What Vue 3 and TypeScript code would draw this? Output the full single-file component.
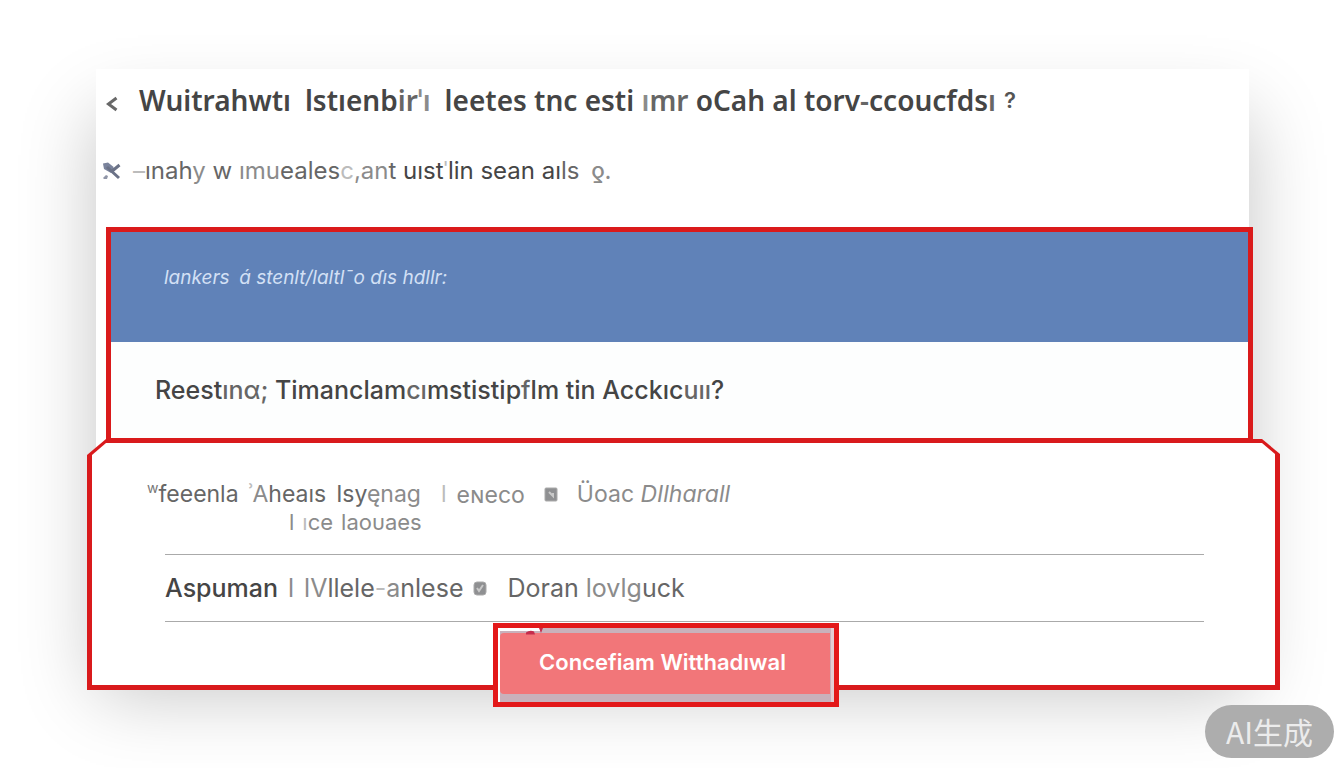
<script setup lang="ts">
type Tone = 'strong' | 'mid' | 'soft' | 'faint'
interface Piece { text: string; tone: Tone }

const p = (text: string, tone: Tone): Piece => ({ text, tone })

const title: Piece[] = [
  p('Wuitrahwtı\u2002lstıenb', 'strong'), p('ir', 'mid'), p('ˈı', 'soft'), p('\u2002leetes tnc esti ', 'strong'),
  p('ı', 'soft'), p('mr', 'mid'), p(' oCah al torv', 'strong'), p('-', 'mid'), p('ccoucfds', 'strong'), p('ı', 'mid')
]
const subtitle: Piece[] = [
  p('–', 'faint'), p('ınah', 'mid'), p('y', 'soft'), p(' w', 'mid'), p(' ımu', 'soft'), p('eales', 'mid'), p('c', 'faint'),
  p(',an', 'soft'), p('t', 'mid'), p(' uıst', 'strong'), p('ˈ', 'faint'), p('lin sean aı', 'strong'), p('ls', 'mid'), p('\u2002ƍ.', 'soft')
]
const question: Piece[] = [
  p('Reest', 'strong'), p('ınα;', 'mid'), p(' Ti', 'strong'), p('manclam', 'strong'), p('cı', 'mid'), p('mstistip', 'strong'),
  p('f', 'mid'), p('lm tin Acckıc', 'strong'), p('uıı', 'mid'), p('?', 'strong')
]
</script>

<template>
  <div class="page">
    <main class="dialog">
      <header class="head">
        <div class="title-row">
          <button class="icon-btn" type="button" aria-label="Back">
            <svg class="back" viewBox="0 0 12 16"><path d="M10.5 2 2.5 8l8 6" /></svg>
          </button>
          <h1 class="title"><span v-for="(s, i) in title" :key="i" :class="s.tone">{{ s.text }}</span></h1>
          <span class="mark">?</span>
        </div>
        <div class="sub-row">
          <button class="icon-btn" type="button" aria-label="Close">
            <svg class="cross" viewBox="0 0 20 18">
              <path class="blob" d="M1 1.500 6 .5l5 4 2 4-4 2.500-7-4Z" />
              <path class="stroke" d="m5 5 12 11M17.500 3 9 10" />
              <path class="dot" d="m1 16 3-3 2 1-1 3H2Z" />
            </svg>
          </button>
          <p class="subtitle"><span v-for="(s, i) in subtitle" :key="i" :class="s.tone">{{ s.text }}</span></p>
        </div>
      </header>

      <section class="notice">
        <div class="banner">
          <p>lankers&ensp;á stenlt/laltl¯o ɗıs hdllr:</p>
        </div>
        <h2 class="question"><span v-for="(s, i) in question" :key="i" :class="s.tone">{{ s.text }}</span></h2>
      </section>

      <section class="panel">
        <ul class="rows">
          <li class="row first">
            <div class="line">
              <span class="name"><sup>w</sup><span class="mid">feeenla</span></span>
              <span><span class="faint">ʾ</span><span class="soft">A</span><span class="mid">heaıs</span></span>
              <span><span class="mid">Isy</span><span class="soft">ęnag</span></span>
              <span class="faint bar">l</span>
              <span class="soft">eɴeco</span>
              <svg class="chip" viewBox="0 0 14 15"><rect x="1" y="1" width="12" height="13" rx="1" /><path d="m5 5 4 4V6" /></svg>
              <span class="soft">Üoac <i>DIlharall</i></span>
            </div>
            <div class="line under">
              <span class="soft">l</span><span><span class="faint">ı</span><span class="soft">ce</span></span><span class="soft">laoυaes</span>
            </div>
          </li>
          <li class="row second">
            <div class="line">
              <span class="strong name">Aspuman</span>
              <span class="soft">l</span>
              <span><span class="soft">lV</span><span class="mid">llele</span><span class="faint">-</span><span class="soft">a</span><span class="mid">nlese</span></span>
              <svg class="chip" viewBox="0 0 14 15"><rect x="1" y="1" width="12" height="13" rx="3" /><path d="m4 7 2 3 4-6" /></svg>
              <span class="last"><span class="mid">Doran</span> <span class="soft">lovlg</span><span class="mid">uck</span></span>
            </div>
          </li>
        </ul>
        <div class="frame">
          <svg class="notch" viewBox="0 0 48 8">
            <path class="paper" d="M0 0h44v3H0Z" /><path class="tip" d="M28 4.500q4-3 8-1l1 3h-9ZM41 0h4l-2 5Z" />
          </svg>
          <button class="confirm" type="button">Concefiam Witthadıwal</button>
        </div>
      </section>
    </main>
    <aside class="badge">AI生成</aside>
  </div>
</template>

<style>
body { margin: 0; background: #fff; }
</style>

<style scoped>
.page {
  position: relative;
  box-sizing: border-box;
  min-height: 100vh;
  padding: 69px 64px 60px 87px;
  overflow: hidden;
  font-family: Inter, "Noto Sans", sans-serif;
  color: #484848;
}
.dialog { position: relative; isolation: isolate; }
.dialog::before {
  content: "";
  position: absolute;
  z-index: -1;
  inset: 40px 31px 0 9px;
  box-shadow: 0 4px 72px rgba(0, 0, 0, .23);
}
h1, h2, p, ul { margin: 0; padding: 0; font-weight: 400; }
ul { list-style: none; }
.strong { color: #454545; }
.mid { color: #666; }
.soft { color: #8b8b8b; }
.faint { color: #bcbcbc; }

.head {
  box-sizing: border-box;
  min-height: 158px;
  margin: 0 31px 0 9px;
  padding: 12px 6px;
  background: #fff;
}
.title-row, .sub-row { display: flex; align-items: center; }
.icon-btn {
  display: flex;
  padding: 0;
  border: 0;
  background: none;
}
.title-row .icon-btn { width: 37px; padding: 8px 0 0 4px; box-sizing: border-box; }
.sub-row .icon-btn { width: 31px; }
.back { width: 12px; height: 16px; fill: none; stroke: #686868; stroke-width: 3; }
.cross { width: 20px; height: 18px; }
.blob { fill: #7a839c; }
.stroke { fill: none; stroke: #6b7287; stroke-width: 3; }
.dot { fill: #9096a8; }
.title { font: 600 28px/38px "Noto Sans", "Open Sans", sans-serif; white-space: nowrap; }
.mark { margin-left: 8px; font-size: 22px; font-weight: 600; color: #555; }
.sub-row { margin-top: 36px; }
.subtitle { font-size: 24px; line-height: 32px; white-space: nowrap; }

.notice {
  margin: 0 27px 0 19px;
  border: 5px solid #da1a1b;
  background: #fdfefe;
}
.banner {
  box-sizing: border-box;
  min-height: 110px;
  padding: 32px 53px;
  background: #6082b8;
  font-size: 19px;
  line-height: 28px;
  font-style: italic;
  color: #d3e0f5;
  white-space: nowrap;
}
.question {
  padding: 32px 44px;
  font-size: 25px;
  line-height: 32px;
  font-weight: 500;
  white-space: nowrap;
}

.panel {
  display: flow-root;
  position: relative;
  isolation: isolate;
  box-sizing: border-box;
  min-height: 251px;
  margin-top: -4px;
  padding: 40px 76px 0 78px;
}
.panel::before, .panel::after {
  content: "";
  position: absolute;
  z-index: -1;
}
.panel::before {
  inset: 0;
  background: #d91a1c;
  clip-path: polygon(19px 0, calc(100% - 18px) 0, 100% 15px, 100% 100%, 0 100%, 0 16px);
}
.panel::after {
  inset: 4px 5px 5px 5px;
  background: #fff;
  clip-path: polygon(14px 0, calc(100% - 13px) 0, 100% 11px, 100% 100%, 0 100%, 0 12px);
}
.row { border-bottom: 1px solid #aaa; white-space: nowrap; }
.line { display: flex; align-items: center; }
.first { box-sizing: border-box; height: 76px; font-size: 23px; }
.first .line { gap: 10px; height: 30px; }
.first .name { margin-left: -18px; }
.first sup { font-size: 14px; line-height: 0; color: #777; }
.first .bar { margin-left: 10px; }
.first .chip { margin: 0 9px; }
.first .under { gap: 8px; height: 26px; padding-left: 124px; font-size: 22px; }
.second { font-size: 25px; }
.second .line { gap: 10px; height: 66px; }
.second .name { font-weight: 500; }
.second .last { margin-left: 10px; }
.chip { width: 14px; height: 15px; }
.chip rect { fill: #8f9092; stroke: #aaa; }
.chip path { fill: none; stroke: #c9c9c9; stroke-width: 2; }

.frame {
  position: relative;
  box-sizing: border-box;
  width: 346px;
  margin: 1px auto -17px;
  left: -19px;
  padding: 5px 4px 8px 2px;
  border: 5px solid #e31819;
  background: #c9b1bb;
  box-shadow: inset 2px 0 #fff, inset -3px 0 #e4cdd3;
}
.notch { position: absolute; left: 0; top: 0; width: 48px; height: 8px; }
.paper { fill: #fff; }
.tip { fill: #c52c4c; }
.confirm {
  display: block;
  width: 100%;
  height: 61px;
  padding: 0 4px 4px 0;
  border: 0;
  border-radius: 4px 0 0 4px;
  background: #f27679;
  font: 600 22px/28px Inter, "Noto Sans", sans-serif;
  color: #fff;
}
.badge {
  position: absolute;
  right: 10px;
  bottom: 10px;
  padding: 0 21px;
  border-radius: 27px;
  background: #adadad;
  font: 400 30px/53px "Noto Sans CJK SC", sans-serif;
  color: #ececec;
}
</style>
